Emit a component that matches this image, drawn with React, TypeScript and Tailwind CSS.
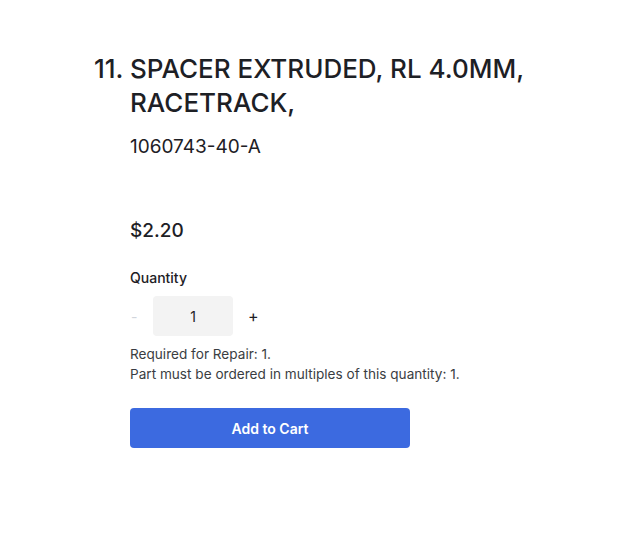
export default function App() {
  return (
    <div className="min-h-screen bg-white text-[#1d2025]" style={{ fontFamily: "Inter, 'Noto Sans', sans-serif" }}>
      <div className="pt-[52px] pl-[94px] pr-[60px]">
        <div className="flex">
          <div className="w-[36px] shrink-0 text-[26px] leading-[34px] font-medium">11.</div>
          <div>
            <h1 className="text-[26px] leading-[34px] font-medium">SPACER EXTRUDED, RL 4.0MM, RACETRACK,</h1>
            <p className="mt-[14px] text-[19px] leading-[26px]">1060743-40-A</p>

            <p className="mt-[58px] text-[19px] leading-[26px] font-medium">$2.20</p>

            <p className="mt-[24px] text-[14px] leading-[20px] font-medium">Quantity</p>
            <div className="mt-[8px] flex items-center">
              <button className="w-[23px] text-left pl-[1px] text-[14px] text-gray-300">-</button>
              <div className="w-[80px] h-[40px] rounded bg-[#f3f3f3] flex items-center justify-center text-[14px]">1</div>
              <button className="ml-[15px] text-[16px]">+</button>
            </div>

            <div className="mt-[8px] text-[13.6px] leading-[20px] text-[#3a3d42]">
              <p>Required for Repair: 1.</p>
              <p>Part must be ordered in multiples of this quantity: 1.</p>
            </div>

            <button className="mt-[24px] w-[280px] h-[40px] rounded bg-[#3c6ae0] text-white text-[14px] font-semibold">
              Add to Cart
            </button>
          </div>
        </div>
      </div>
    </div>
  );
}
